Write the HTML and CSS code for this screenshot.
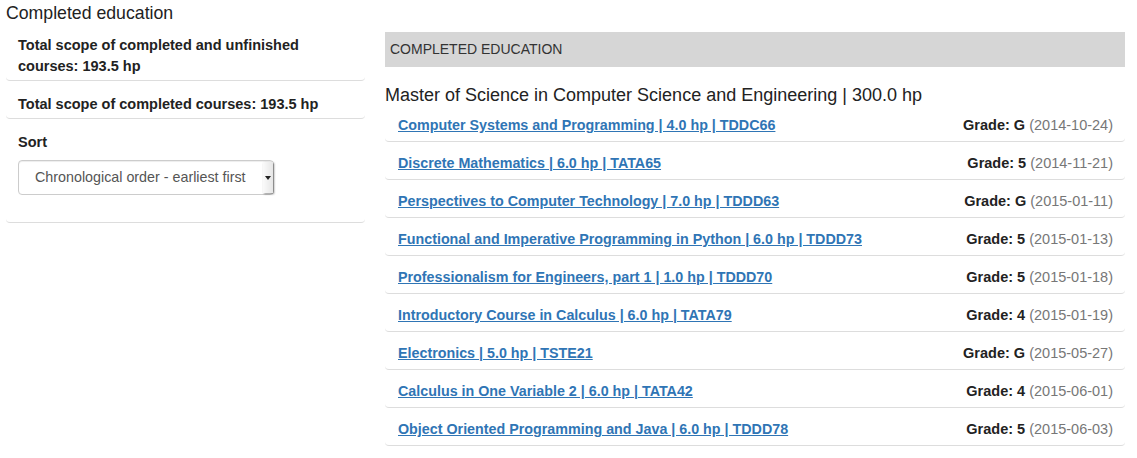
FILE: index.html
```html
<!DOCTYPE html>
<html>
<head>
<meta charset="utf-8">
<link rel="stylesheet" href="styles.css">
</head>
<body>
<h1 class="page-title">Completed education</h1>
<div class="layout">
  <aside class="sidebar">
    <div class="side-item">Total scope of completed and unfinished courses: 193.5 hp</div>
    <div class="side-item">Total scope of completed courses: 193.5 hp</div>
    <div class="side-item sort-item">
      <div class="sort-label">Sort</div>
      <div class="select">
        <span class="select-text">Chronological order - earliest first</span>
        <span class="select-btn"><span class="caret"></span></span>
      </div>
    </div>
  </aside>
  <main class="content">
    <div class="section-bar">COMPLETED EDUCATION</div>
    <h2 class="program">Master of Science in Computer Science and Engineering | 300.0 hp</h2>
    <ul class="courses">
      <li class="course"><a href="#">Computer Systems and Programming | 4.0 hp | TDDC66</a><span class="grade"><b>Grade: G</b> <span class="date">(2014-10-24)</span></span></li>
      <li class="course"><a href="#">Discrete Mathematics | 6.0 hp | TATA65</a><span class="grade"><b>Grade: 5</b> <span class="date">(2014-11-21)</span></span></li>
      <li class="course"><a href="#">Perspectives to Computer Technology | 7.0 hp | TDDD63</a><span class="grade"><b>Grade: G</b> <span class="date">(2015-01-11)</span></span></li>
      <li class="course"><a href="#">Functional and Imperative Programming in Python | 6.0 hp | TDDD73</a><span class="grade"><b>Grade: 5</b> <span class="date">(2015-01-13)</span></span></li>
      <li class="course"><a href="#">Professionalism for Engineers, part 1 | 1.0 hp | TDDD70</a><span class="grade"><b>Grade: 5</b> <span class="date">(2015-01-18)</span></span></li>
      <li class="course"><a href="#">Introductory Course in Calculus | 6.0 hp | TATA79</a><span class="grade"><b>Grade: 4</b> <span class="date">(2015-01-19)</span></span></li>
      <li class="course"><a href="#">Electronics | 5.0 hp | TSTE21</a><span class="grade"><b>Grade: G</b> <span class="date">(2015-05-27)</span></span></li>
      <li class="course"><a href="#">Calculus in One Variable 2 | 6.0 hp | TATA42</a><span class="grade"><b>Grade: 4</b> <span class="date">(2015-06-01)</span></span></li>
      <li class="course"><a href="#">Object Oriented Programming and Java | 6.0 hp | TDDD78</a><span class="grade"><b>Grade: 5</b> <span class="date">(2015-06-03)</span></span></li>
    </ul>
  </main>
</div>
</body>
</html>
```

FILE: styles.css
```css
* { box-sizing: border-box; }
html, body { margin: 0; padding: 0; background: #fff; }
body {
  font-family: "Liberation Sans", Arial, sans-serif;
  font-size: 14px;
  line-height: 21px;
  color: #222;
  padding: 0 12px 0 6px;
}
.page-title {
  margin: 0;
  font-size: 17.7px;
  font-weight: normal;
  line-height: 26px;
  color: #222;
}
.layout {
  display: flex;
  gap: 20px;
  align-items: flex-start;
}
.sidebar {
  width: 359px;
  flex: none;
}
.side-item {
  padding: 13px 12px 3px;
  font-weight: bold;
  font-size: 14.5px;
  color: #222;
  border-bottom: 1px solid #ddd;
  border-radius: 4px;
}
.side-item:first-child { padding-top: 9px; }
.sort-item {
  padding-top: 13px;
  padding-bottom: 27px;
}
.sort-label { margin-bottom: 7px; }
.select {
  display: flex;
  align-items: stretch;
  width: 256px;
  height: 35px;
  border: 1px solid #ccc;
  border-radius: 4px;
  box-shadow: inset 0 1px 1px rgba(0,0,0,.075);
  font-weight: normal;
  font-size: 14.3px;
  color: #555;
}
.select-text {
  flex: 1;
  display: flex;
  align-items: center;
  padding-left: 16px;
}
.select-btn {
  width: 10px;
  margin: 1px 0;
  background: linear-gradient(to right, #fafafa, #e6e6e6);
  box-shadow: 1px 1px 2px rgba(0,0,0,.45);
  display: flex;
  align-items: center;
  justify-content: center;
}
.caret {
  width: 0; height: 0;
  border-left: 3px solid transparent;
  border-right: 3px solid transparent;
  border-top: 4px solid #222;
}
.content {
  flex: 1;
  padding-top: 6px;
}
.section-bar {
  background: #d6d6d6;
  height: 35px;
  line-height: 35px;
  padding-left: 5px;
  color: #333;
  font-size: 14px;
}
.program {
  margin: 16px 0 0;
  font-size: 18px;
  font-weight: normal;
  line-height: 24px;
  color: #222;
}
.courses {
  list-style: none;
  margin: 0;
  padding: 0;
}
.course {
  display: flex;
  justify-content: space-between;
  align-items: center;
  padding: 11px 12px 5px 13px;
  border-bottom: 1px solid #ddd;
  border-radius: 4px;
}
.course:first-child { padding-top: 8px; }
.course a {
  color: #2f75b5;
  font-weight: bold;
  font-size: 14.3px;
  text-decoration: underline;
}
.grade { font-size: 14.5px; }
.grade b { color: #222; }
.date { color: #777; }
```
